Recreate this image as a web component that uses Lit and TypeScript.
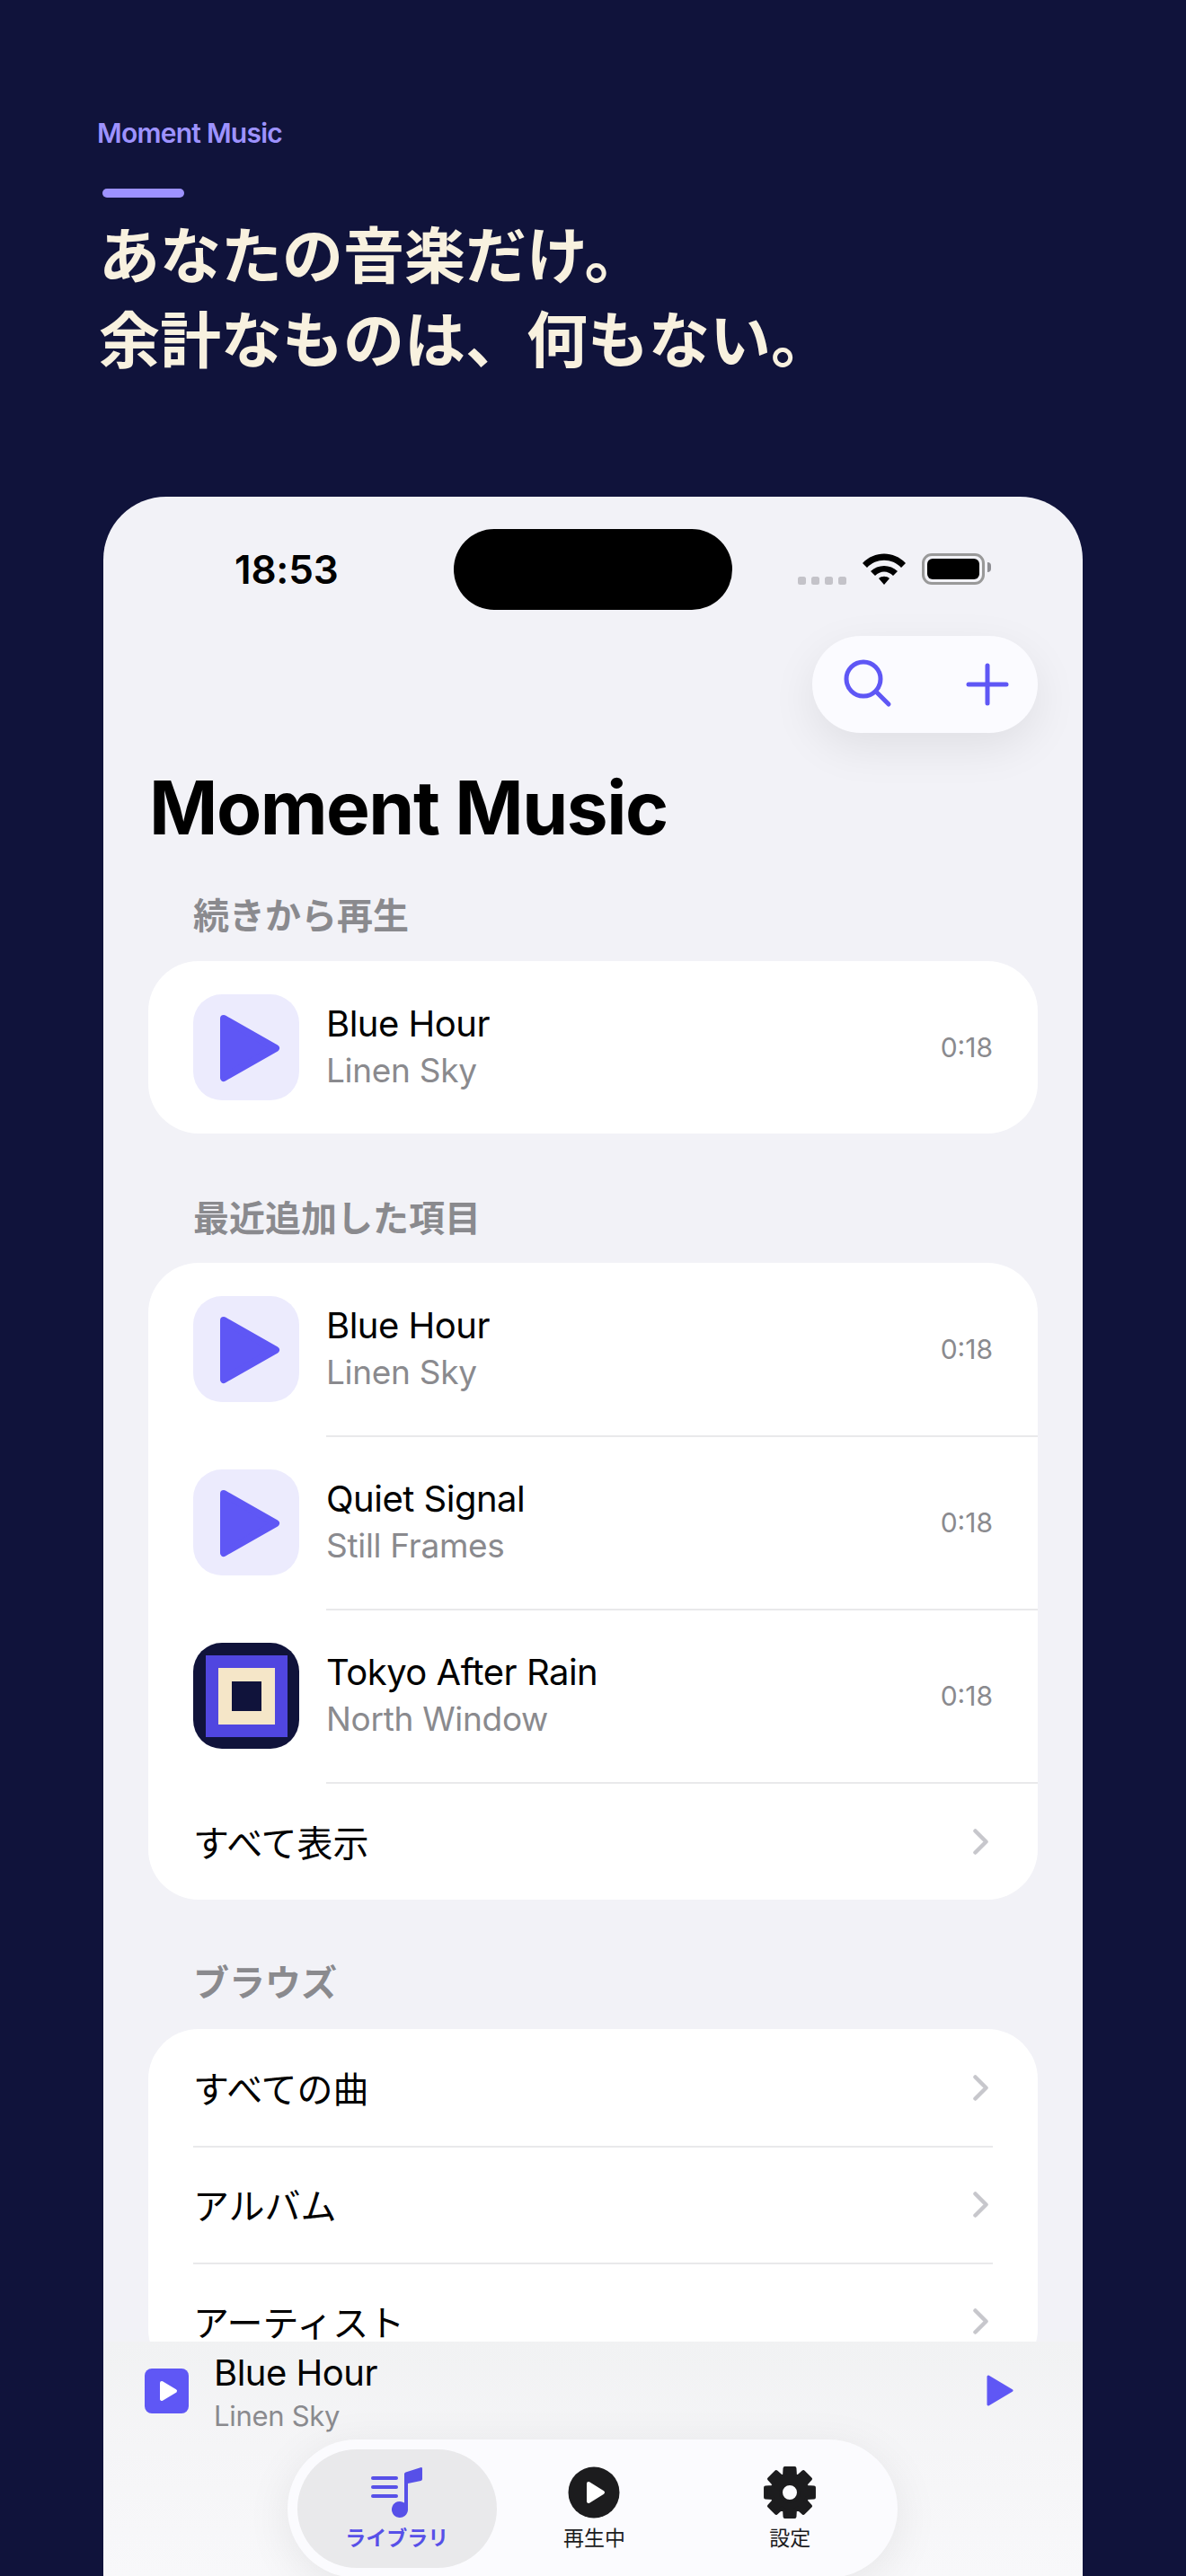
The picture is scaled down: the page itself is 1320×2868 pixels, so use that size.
import { LitElement, html, css, svg } from "lit";
import { customElement } from "lit/decorators.js";

function gearPath(): string {
  const cx = 30, cy = 30, teeth = 8, rOut = 27.5, rIn = 20;
  const pts: string[] = [];
  for (let i = 0; i < teeth; i++) {
    const a = (i * 2 * Math.PI) / teeth - Math.PI / 2;
    const w = 0.2, w2 = 0.3;
    const p = (r: number, t: number) => `${(cx + r * Math.cos(t)).toFixed(2)} ${(cy + r * Math.sin(t)).toFixed(2)}`;
    pts.push(`${i === 0 ? "M" : "L"}${p(rIn, a - w2)}`, `L${p(rOut, a - w)}`, `L${p(rOut, a + w)}`, `L${p(rIn, a + w2)}`);
  }
  return pts.join(" ") + " Z";
}

const tri = (w: number, h: number, pts: string, sw: number, color: string) => html`
  <svg width=${w} height=${h} viewBox="0 0 ${w} ${h}">
    ${svg`<polygon points=${pts} fill=${color} stroke=${color} stroke-width=${sw} stroke-linejoin="round"></polygon>`}
  </svg>`;

const chevron = html`<svg class="chev" width="17" height="29" viewBox="0 0 17 29">
  <polyline points="2.5,2.5 14.5,14.5 2.5,26.5" fill="none" stroke="#C7C7CC" stroke-width="4.5" stroke-linecap="round" stroke-linejoin="round"></polyline>
</svg>`;

@customElement("app-root")
export class AppRoot extends LitElement {
  static styles = css`
    :host {
      display: block;
      width: 1320px;
      height: 2868px;
      overflow: hidden;
      background: #10133b;
      font-family: Inter, "Noto Sans CJK JP", sans-serif;
    }
    .hero { height: 553px; padding: 130px 0 0 108px; box-sizing: border-box; }
    .eyebrow { font-size: 30px; line-height: 36px; font-weight: 600; color: #9d92ff; letter-spacing: -0.75px; }
    .rule { width: 91px; height: 10px; margin: 44px 0 0 6px; border-radius: 5px; background: #9d92ff; }
    h1 {
      margin: 14px 0 0 2px;
      font-size: 68px;
      line-height: 94px;
      font-weight: 700;
      color: #f8f1df;
      font-family: "Noto Sans CJK JP", sans-serif;
      white-space: nowrap;
    }
    .phone {
      position: relative;
      width: 1090px;
      height: 2315px;
      margin-left: 115px;
      border-radius: 70px 70px 0 0;
      background: #f2f2f7;
      overflow: hidden;
    }
    .status {
      display: grid;
      grid-template-columns: 1fr 310px 1fr;
      height: 90px;
      padding-top: 36px;
    }
    .time { padding-left: 146px; font-size: 44px; line-height: 90px; font-weight: 600; color: #000; letter-spacing: -0.2px; }
    .island { background: #000; border-radius: 45px; }
    .sys { display: flex; align-items: flex-start; padding: 27px 0 0 73px; }
    .dots { display: flex; gap: 6px; margin: 26px 18px 0 0; }
    .dots i { width: 9px; height: 9px; border-radius: 2.5px; background: #c4c3c9; }
    .wifi { margin-right: 18px; }
    .battery {
      position: relative;
      box-sizing: border-box;
      width: 70px;
      height: 35px;
      padding: 3px;
      border: 3px solid #999;
      border-radius: 11px;
    }
    .battery b { display: block; height: 100%; border-radius: 6px; background: #000; }
    .battery::after {
      content: "";
      position: absolute;
      right: -10px;
      top: 7px;
      width: 4px;
      height: 11px;
      border-radius: 0 4px 4px 0;
      background: #8e8e93;
    }
    .tools {
      display: flex;
      align-items: center;
      justify-content: space-between;
      box-sizing: border-box;
      width: 251px;
      height: 108px;
      margin: 29px 50px 0 auto;
      padding: 0 32px 0 33px;
      border-radius: 54px;
      background: #fbfbff;
      box-shadow: 0 16px 50px rgba(0, 0, 0, 0.08);
    }
    .title { margin: 34px 0 0 51px; font-size: 82px; line-height: 100px; font-weight: 700; color: #000; letter-spacing: -1.5px; }
    .label { margin: 45px 0 25px 100px; font-size: 40px; line-height: 50px; font-weight: 600; color: #8a8a8e; }
    .label.next { margin-top: 70px; margin-bottom: 24px; }
    .label.third { margin-top: 68px; margin-bottom: 26px; }
    .card { margin: 0 50px; border-radius: 56px; background: #fff; overflow: hidden; }
    .track { display: flex; padding-left: 50px; height: 192px; align-items: center; }
    .track + .track, .track + .more { margin-top: 1px; }
    .thumb {
      display: flex;
      align-items: center;
      justify-content: center;
      flex: none;
      width: 118px;
      height: 118px;
      border-radius: 32px;
      background: #ecebfd;
    }
    .art { background: #10133b; }
    .art div { display: flex; align-items: center; justify-content: center; }
    .a1 { width: 91px; height: 91px; background: #5046e0; }
    .a2 { width: 63px; height: 63px; background: #f5e6c8; }
    .a3 { width: 33px; height: 33px; background: #10133b; }
    .body {
      display: flex;
      align-items: center;
      flex: 1;
      align-self: stretch;
      margin-left: 30px;
      padding-right: 50px;
    }
    .sep { box-shadow: 0 2px 0 #e9e9eb; }
    .txt { flex: 1; padding-bottom: 0; }
    .name { font-size: 40px; line-height: 50px; color: #000; letter-spacing: -0.5px; }
    .sub { font-size: 37px; line-height: 50px; color: #8a8a8e; margin-top: 2px; letter-spacing: -0.3px; }
    .dur { font-size: 30px; line-height: 40px; color: #8a8a8e; }
    .more {
      display: flex;
      align-items: center;
      justify-content: space-between;
      height: 130px;
      margin: 0 50px;
      font-size: 40px;
      color: #000;
    }
    .more.sep { box-shadow: 0 2px 0 #e9e9eb; }
    .more .chev { margin-right: 5px; }
    .mini {
      position: absolute;
      left: 0;
      right: 0;
      top: 2054px;
      bottom: 0;
      display: flex;
      align-items: flex-start;
      padding: 10px 77px 0 46px;
      background: linear-gradient(180deg, #f1f2f3 0%, #f5f5f7 45%, #f8f8fa 100%);
    }
    .mini-thumb {
      display: flex;
      flex: none;
      width: 49px;
      height: 50px;
      margin-top: 20px;
      border-radius: 8px;
      background: #5f57f5;
    }
    .mini-txt { flex: 1; margin-left: 28px; }
    .mini-txt .name { line-height: 50px; }
    .mini-txt .sub { font-size: 31px; line-height: 46px; margin-top: 0; }
    .mini-play { margin-top: 27px; }
    .tabs {
      position: absolute;
      left: 205px;
      top: 2163px;
      display: flex;
      box-sizing: border-box;
      width: 679px;
      height: 154px;
      padding: 11px;
      border-radius: 77px;
      background: #fbfbfe;
      box-shadow: 0 10px 50px rgba(0, 0, 0, 0.08);
    }
    .tab {
      display: flex;
      flex-direction: column;
      align-items: center;
      width: 228px;
      height: 132px;
      padding-top: 19px;
      box-sizing: border-box;
      border-radius: 66px;
      font-size: 23px;
      line-height: 30px;
      color: #1c1c1e;
    }
    .tab svg { display: block; margin-bottom: 7px; }
    .tab.on { width: 232px; background: #e9e9eb; color: #5750e8; font-weight: 600; }
  `;

  private track(name: string, sub: string, art: boolean, sep: boolean) {
    return html`<div class="track">
      ${art
        ? html`<div class="thumb art"><div class="a1"><div class="a2"><div class="a3"></div></div></div></div>`
        : html`<div class="thumb">${tri(118, 118, "34,27 92,60 34,93", 8, "#5f57f5")}</div>`}
      <div class="body ${sep ? "sep" : ""}">
        <div class="txt">
          <div class="name">${name}</div>
          <div class="sub">${sub}</div>
        </div>
        <div class="dur">0:18</div>
      </div>
    </div>`;
  }

  render() {
    return html`
      <div class="hero">
        <div class="eyebrow">Moment Music</div>
        <div class="rule"></div>
        <h1>あなたの音楽だけ。<br />余計なものは、何もない。</h1>
      </div>
      <div class="phone">
        <div class="status">
          <div class="time">18:53</div>
          <div class="island"></div>
          <div class="sys">
            <div class="dots"><i></i><i></i><i></i><i></i></div>
            <svg class="wifi" width="48" height="35" viewBox="0 0 48 35">
              <path d="M0 11C13-3 35-3 48 11L43 16C33 5 15 5 5 16Z M9 20C17 12 31 12 39 20L34 25C28 19 20 19 14 25Z M18 28C21 25 27 25 30 28L24 35Z" fill="#000"></path>
            </svg>
            <div class="battery"><b></b></div>
          </div>
        </div>
        <div class="tools">
          <svg width="60" height="60" viewBox="0 0 60 60" fill="none" stroke="#5f57f5" stroke-width="5" stroke-linecap="round">
            <circle cx="24" cy="24" r="19"></circle>
            <line x1="38" y1="38" x2="52" y2="52"></line>
          </svg>
          <svg width="48" height="48" viewBox="0 0 48 48" fill="none" stroke="#5f57f5" stroke-width="5" stroke-linecap="round">
            <line x1="24" y1="3" x2="24" y2="45"></line>
            <line x1="3" y1="24" x2="45" y2="24"></line>
          </svg>
        </div>
        <div class="title">Moment Music</div>
        <div class="label">続きから再生</div>
        <div class="card">${this.track("Blue Hour", "Linen Sky", false, false)}</div>
        <div class="label next">最近追加した項目</div>
        <div class="card">
          ${this.track("Blue Hour", "Linen Sky", false, true)}
          ${this.track("Quiet Signal", "Still Frames", false, true)}
          ${this.track("Tokyo After Rain", "North Window", true, true)}
          <div class="more"><span>すべて表示</span>${chevron}</div>
        </div>
        <div class="label third">ブラウズ</div>
        <div class="card">
          <div class="more sep"><span>すべての曲</span>${chevron}</div>
          <div class="more sep"><span>アルバム</span>${chevron}</div>
          <div class="more"><span>アーティスト</span>${chevron}</div>
        </div>
        <div class="mini">
          <div class="mini-thumb">${tri(49, 50, "19,16 34,25 19,34", 4, "#ffffff")}</div>
          <div class="mini-txt">
            <div class="name">Blue Hour</div>
            <div class="sub">Linen Sky</div>
          </div>
          <div class="mini-play">${tri(30, 35, "2,2 28,17.5 2,33", 3, "#5f57f5")}</div>
        </div>
        <div class="tabs">
          <div class="tab on">
            <svg width="58" height="58" viewBox="0 0 58 58">
              <g stroke="#5750e8" stroke-width="4" stroke-linecap="round">
                <line x1="2" y1="13" x2="28" y2="13"></line>
                <line x1="2" y1="23" x2="28" y2="23"></line>
                <line x1="2" y1="33" x2="28" y2="33"></line>
              </g>
              <path d="M37 8.5Q37 7 38.5 6.6L55 1.2Q57 .8 57 2.5V14Q57 15.5 55.5 16L41 19V48A9 9 0 1 1 37 40.500Z" fill="#5750e8"></path>
            </svg>
            <span>ライブラリ</span>
          </div>
          <div class="tab">
            <svg width="58" height="58" viewBox="0 0 58 58">
              <circle cx="29" cy="29" r="28.500" fill="#1c1c1e"></circle>
              <polygon points="23,19 39,29 23,39" fill="#fff" stroke="#fff" stroke-width="4" stroke-linejoin="round"></polygon>
            </svg>
            <span>再生中</span>
          </div>
          <div class="tab">
            <svg width="60" height="60" viewBox="0 0 60 60" style="margin-top:-1px;margin-bottom:6px">
              <path d="${gearPath()} M30 20A10 10 0 1 0 30 40A10 10 0 1 0 30 20Z" fill="#1c1c1e" fill-rule="evenodd" stroke="#1c1c1e" stroke-width="4" stroke-linejoin="round"></path>
            </svg>
            <span>設定</span>
          </div>
        </div>
      </div>
    `;
  }
}
